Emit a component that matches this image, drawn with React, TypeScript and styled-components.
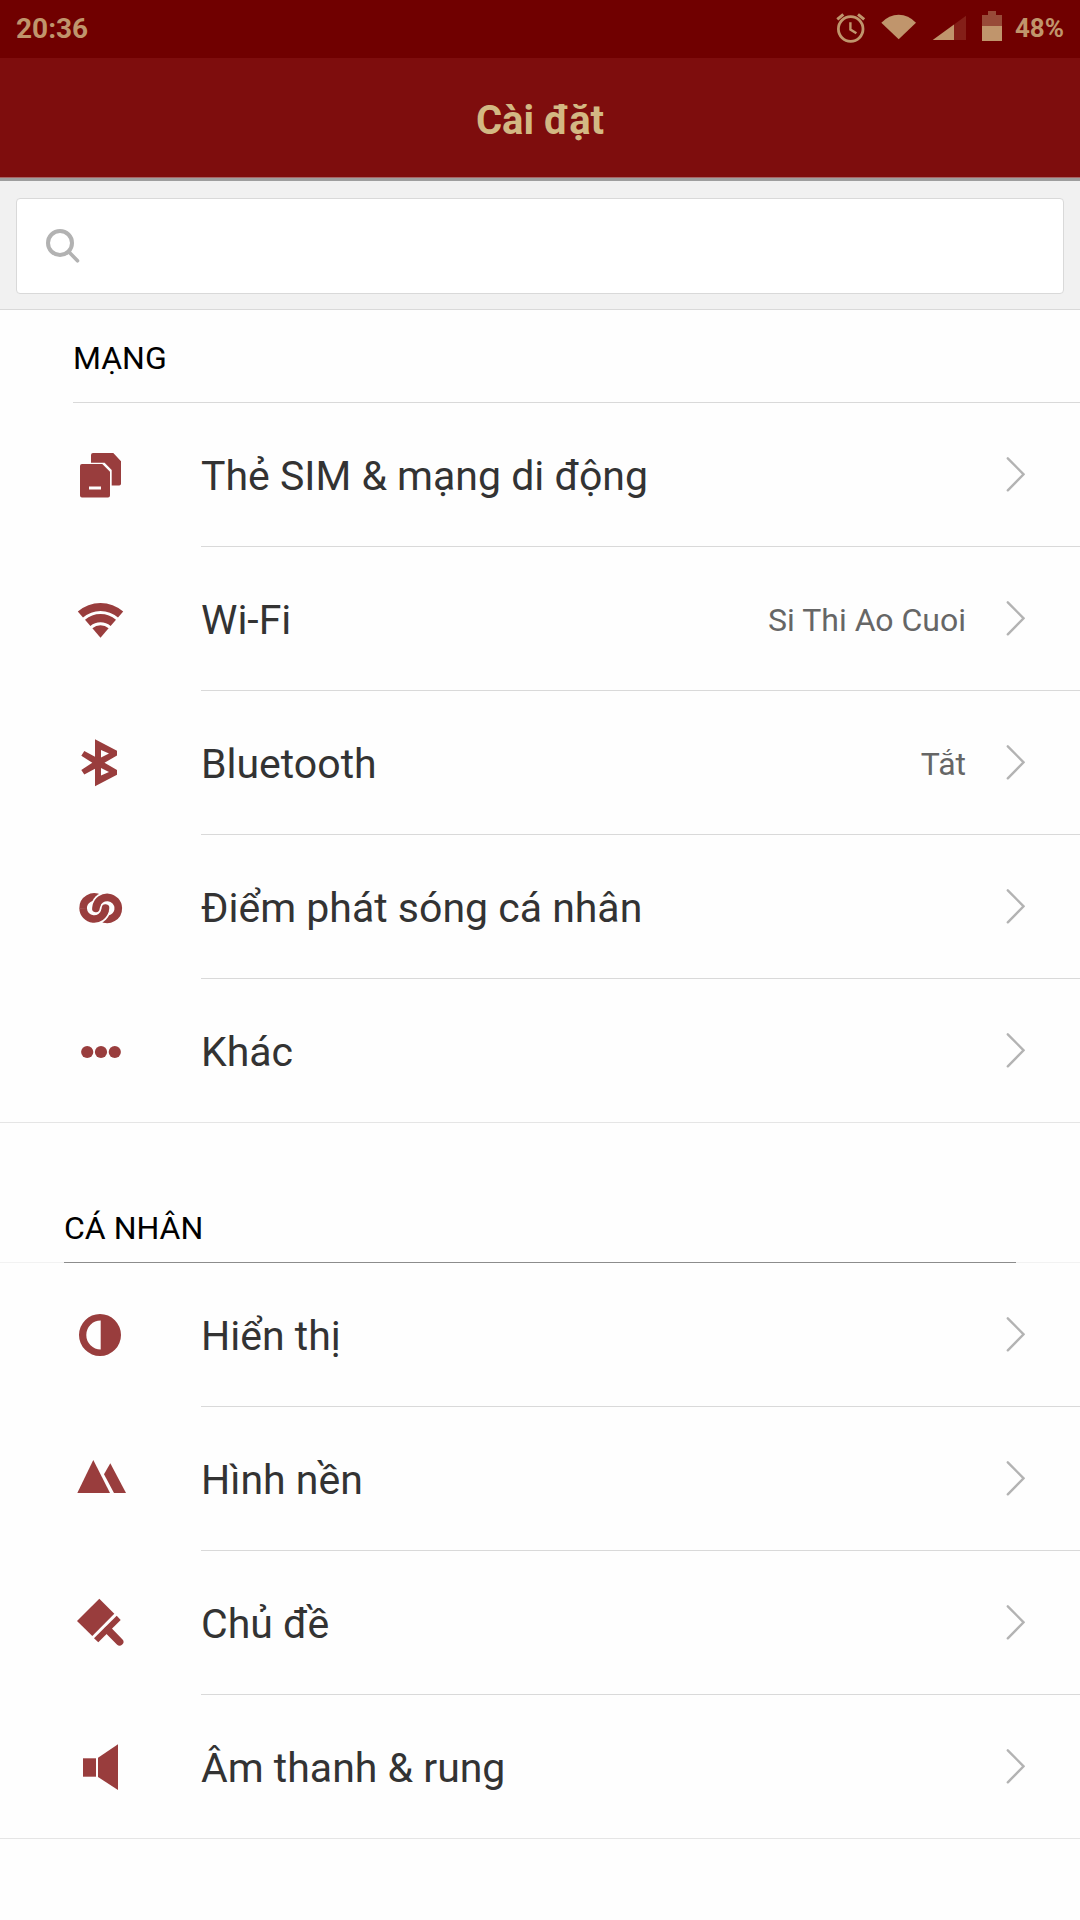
import React from "react";
import styled, { createGlobalStyle } from "styled-components";

const color = {
  status: "#700000",
  bar: "#7e0d0d",
  gold: "#c0956c",
  title: "#d3b883",
  icon: "#993d3d",
  line: "#d9d9d9",
  page: "#fefefe",
};

const GlobalStyle = createGlobalStyle`
  * { box-sizing: border-box; }
  body {
    margin: 0;
    background: ${color.page};
    font-family: Roboto, "Noto Sans", sans-serif;
  }
`;

const StatusBar = styled.div`
  display: flex;
  align-items: center;
  justify-content: space-between;
  height: 58px;
  padding: 0 16px 2px;
  background: ${color.status};
  color: ${color.gold};
  font-weight: 700;
`;

const Clock = styled.time`
  font-size: 28px;
`;

const StatusGroup = styled.div`
  display: flex;
  align-items: center;
  gap: 13px;
  font-size: 26px;
`;

const StatusIcons = styled.div`
  display: flex;
  gap: 15px;

  svg {
    display: block;
    overflow: visible;
  }
`;

const TitleBar = styled.header`
  display: flex;
  align-items: center;
  justify-content: center;
  height: 123px;
  padding-top: 4px;
  background: ${color.bar};
  border-bottom: 3px solid #9e9e9e;
  box-shadow: inset 0 -1px #a86565;
`;

const Title = styled.h1`
  margin: 0;
  color: ${color.title};
  font-size: 40px;
  font-weight: 700;
`;

const SearchArea = styled.form`
  padding: 17px 16px 15px;
  background: #f1f1f1;
  border-bottom: 1px solid ${color.line};
`;

const SearchBox = styled.label`
  display: flex;
  align-items: center;
  gap: 24px;
  height: 96px;
  padding: 0 29px;
  background: #fff;
  border: 1px solid ${color.line};
  border-radius: 4px;
`;

const SearchInput = styled.input`
  flex: 1;
  min-width: 0;
  height: 100%;
  border: 0;
  outline: 0;
  background: transparent;
  color: #333;
  font: inherit;
  font-size: 32px;
`;

const SectionHead = styled.div<{ $spaced?: boolean }>`
  box-shadow: ${(p) => (p.$spaced ? "inset 0 -1px #f2f2f2" : "none")};
`;

const SectionTitle = styled.h2<{ $spaced?: boolean }>`
  margin: ${(p) => (p.$spaced ? "0 64px" : "0 0 0 73px")};
  padding: ${(p) => (p.$spaced ? "81px 0 10px" : "24px 0 20px")};
  border-bottom: 1px solid ${(p) => (p.$spaced ? "#8c8c8c" : color.line)};
  color: #000;
  font-size: 32px;
  font-weight: 400;
  line-height: 48px;
`;

const List = styled.ul`
  margin: 0;
  padding: 0;
  list-style: none;
`;

const RowBody = styled.span`
  display: flex;
  flex: 1;
  align-items: center;
  height: 144px;
  padding-right: 55px;
  border-bottom: 1px solid ${color.line};
`;

const Item = styled.li`
  &:last-child {
    border-bottom: 1px solid #e5e5e5;
  }

  &:last-child ${RowBody} {
    height: 143px;
    border-bottom: 0;
  }
`;

const Row = styled.button`
  display: flex;
  width: 100%;
  padding: 0;
  border: 0;
  background: transparent;
  color: #333;
  font: inherit;
  text-align: left;
  cursor: pointer;
`;

const IconCell = styled.span`
  display: flex;
  align-items: center;
  width: 201px;
  height: 143px;
  padding-left: 75px;

  svg {
    display: block;
    overflow: visible;
    fill: ${color.icon};
  }
`;

const Label = styled.span`
  flex: 1;
  padding-top: 3px;
  font-size: 41px;
`;

const Value = styled.span`
  margin-right: 40px;
  padding-top: 3px;
  color: #666;
  font-size: 32px;
`;

const Glyph = ({ children }: { children: React.ReactNode }) => (
  <svg width="51" height="51" viewBox="0 0 51 51" aria-hidden="true">
    {children}
  </svg>
);

const SimIcon = () => (
  <Glyph>
    <path d="M18 4H38.3L46 12.3V34.7Q46 36.5 44.2 36.5H36.7V21L29.6 13.7H16V6Q16 4 18 4Z" />
    <path
      fillRule="evenodd"
      d="M7 15H27.3L35 22.7V46.5Q35 48.5 33 48.5H7Q5 48.5 5 46.5V17Q5 15 7 15ZM14 37.5V40.5H26V37.5Z"
    />
  </Glyph>
);

const WifiIcon = () => (
  <Glyph>
    <path d="M2.8 18.5A34.7 34.7 0 0 1 48.2 18.5L43 24.5A26.7 26.7 0 0 0 8 24.5Z" />
    <path d="M10 26.8A23.7 23.7 0 0 1 41 26.8L35.6 33.1A15.4 15.4 0 0 0 15.4 33.1Z" />
    <path d="M17.4 35.3A12.4 12.4 0 0 1 33.6 35.3L25.5 44.7Z" />
  </Glyph>
);

const BluetoothIcon = () => (
  <Glyph>
    <path
      fillRule="evenodd"
      d="M20 2.3L42 13.8V18.6L29.5 25.8L42 33V37.8L20 49.3V31.8L9.3 37.6L6.3 32.9L17.3 25.8L6.3 18.7L9.3 14L20 19.8ZM26 13V20.6L34 16.6ZM26 38.6V31L34 35Z"
    />
  </Glyph>
);

const Hook = ({ turn }: { turn: number }) => (
  <g
    transform={`rotate(${turn} 25.7 27.2)`}
    fill="none"
    stroke={color.icon}
    strokeWidth="7.6"
  >
    <path mask="url(#hook-gap)" d="M24.8 17.6A11.1 11.1 0 0 0 8.1 27.4" />
    <path d="M8.1 27.2A11.1 11.1 0 0 0 30 29.5" />
    <path strokeLinecap="round" d="M29.8 30Q30.3 28.6 30.5 27" />
  </g>
);

const HotspotIcon = () => (
  <Glyph>
    <mask id="hook-gap" maskUnits="userSpaceOnUse" x="0" y="0" width="51" height="51">
      <rect width="51" height="51" fill="#fff" />
      <circle cx="32.2" cy="27.2" r="16.5" fill="#000" />
    </mask>
    <Hook turn={0} />
    <Hook turn={180} />
  </Glyph>
);

const MoreIcon = () => (
  <Glyph>
    <circle cx="12.2" cy="27" r="6.1" />
    <circle cx="26" cy="27" r="6.1" />
    <circle cx="39.8" cy="27" r="6.1" />
  </Glyph>
);

const DisplayIcon = () => (
  <Glyph>
    <path
      fillRule="evenodd"
      d="M25 5A21 21 0 1 1 25 47A21 21 0 1 1 25 5ZM25.7 11.6A14.4 14.4 0 0 0 25.7 40.4Z"
    />
  </Glyph>
);

const WallpaperIcon = () => (
  <Glyph>
    <path d="M18.3 7L35 40H2.3Z" />
    <path d="M35.3 10.3L51 40H39L29 21.3Z" />
  </Glyph>
);

const ThemeIcon = () => (
  <Glyph>
    <path d="M24.3 1.7L39.3 16.7L17.3 39L2 24Z" />
    <path d="M41.7 18.7L45.7 23L23.3 45.3L19 41.3Z" />
    <path d="M33 33L44.6 44.8" stroke={color.icon} strokeWidth="7.6" strokeLinecap="round" />
  </Glyph>
);

const SoundIcon = () => (
  <Glyph>
    <path d="M8 17.3H21V35.7H8Z" />
    <path d="M23 16.7L43 3.3V49L23 36Z" />
  </Glyph>
);

const Chevron = () => (
  <svg width="19" height="35" viewBox="0 0 19 35" aria-hidden="true">
    <path
      d="M1.8 1.3L17.6 17.3L1.8 33.3"
      fill="none"
      stroke="#b3b3b3"
      strokeWidth="2.4"
      strokeLinecap="round"
    />
  </svg>
);

type Entry = { label: string; icon: React.ReactNode; value?: string };

const network: Entry[] = [
  { label: "Thẻ SIM & mạng di động", icon: <SimIcon /> },
  { label: "Wi-Fi", icon: <WifiIcon />, value: "Si Thi Ao Cuoi" },
  { label: "Bluetooth", icon: <BluetoothIcon />, value: "Tắt" },
  { label: "Điểm phát sóng cá nhân", icon: <HotspotIcon /> },
  { label: "Khác", icon: <MoreIcon /> },
];

const personal: Entry[] = [
  { label: "Hiển thị", icon: <DisplayIcon /> },
  { label: "Hình nền", icon: <WallpaperIcon /> },
  { label: "Chủ đề", icon: <ThemeIcon /> },
  { label: "Âm thanh & rung", icon: <SoundIcon /> },
];

const Section = ({
  title,
  entries,
  spaced,
}: {
  title: string;
  entries: Entry[];
  spaced?: boolean;
}) => (
  <section>
    <SectionHead $spaced={spaced}>
      <SectionTitle $spaced={spaced}>{title}</SectionTitle>
    </SectionHead>
    <List>
      {entries.map((entry) => (
        <Item key={entry.label}>
          <Row type="button">
            <IconCell>{entry.icon}</IconCell>
            <RowBody>
              <Label>{entry.label}</Label>
              {entry.value && <Value>{entry.value}</Value>}
              <Chevron />
            </RowBody>
          </Row>
        </Item>
      ))}
    </List>
  </section>
);

export default function App() {
  return (
    <>
      <GlobalStyle />
      <StatusBar>
        <Clock>20:36</Clock>
        <StatusGroup>
          <StatusIcons aria-hidden="true">
            <svg width="30" height="32" viewBox="0 0 30 32" fill="none" stroke={color.gold}>
              <circle cx="14.7" cy="17" r="12.3" strokeWidth="2.8" />
              <path d="M14.4 10.2V17.6L20.4 21.3" strokeWidth="2.4" />
              <path d="M1.3 7.3L7.3 2.3M22 2.3L28.2 7.3" strokeWidth="3" />
            </svg>
            <svg width="36" height="32" viewBox="0 0 36 32" fill={color.gold}>
              <path d="M0.3 10.7Q8 2.7 17.7 2.7T35 10.7L17.7 27.3Z" />
            </svg>
            <svg width="35" height="32" viewBox="0 0 35 32">
              <path d="M22 12.5L34 3.7V28H22Z" fill="#841f18" />
              <path d="M0.7 28L22 12.5V28Z" fill={color.gold} />
            </svg>
            <svg width="20" height="32" viewBox="0 0 20 32">
              <path d="M6 -1H14V3H20V14H0V3H6Z" fill="#984a38" />
              <path d="M0 14H20V29H0Z" fill={color.gold} />
            </svg>
          </StatusIcons>
          <span>48%</span>
        </StatusGroup>
      </StatusBar>
      <TitleBar>
        <Title>Cài đặt</Title>
      </TitleBar>
      <main>
        <SearchArea role="search" onSubmit={(e) => e.preventDefault()}>
          <SearchBox>
            <svg
              width="34"
              height="34"
              viewBox="0 0 34 34"
              fill="none"
              stroke="#b2b2b2"
              strokeWidth="4"
              aria-hidden="true"
            >
              <circle cx="14" cy="14" r="12" />
              <path d="M22.5 22.5L31.5 31.8" strokeWidth="3.6" strokeLinecap="round" />
            </svg>
            <SearchInput type="text" aria-label="Tìm kiếm" />
          </SearchBox>
        </SearchArea>
        <Section title="MẠNG" entries={network} />
        <Section title="CÁ NHÂN" entries={personal} spaced />
      </main>
    </>
  );
}
